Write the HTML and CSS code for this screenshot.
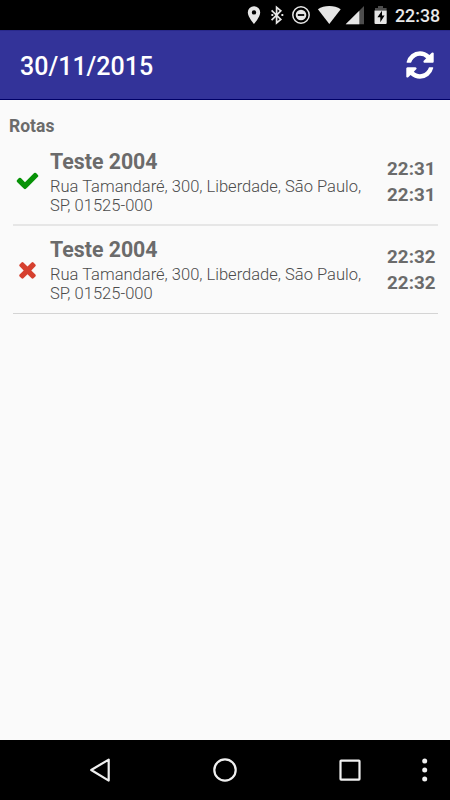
FILE: index.html
```html
<!DOCTYPE html>
<html lang="pt-BR">
<head>
<meta charset="utf-8">
<title>Rotas</title>
<link rel="stylesheet" href="styles.css">
</head>
<body>
<div class="screen">
  <div class="status">
    <svg class="status-icons" width="150" height="30" viewBox="240 0 150 30">
      <path fill="#e6e6e6" fill-rule="evenodd" d="M254 6.300a6.200 6.200 0 0 0-6.200 6.200c0 4.400 6.200 11.500 6.200 11.500s6.200-7.100 6.200-11.500a6.200 6.200 0 0 0-6.200-6.200zm0 3.900a2.200 2.200 0 1 1 0 4.400a2.200 2.200 0 0 1 0-4.400z"/>
      <path fill="none" stroke="#e6e6e6" stroke-width="1.700" d="M271.600 10.300l9.200 9.200-4.200 3.500v-15.600l4.200 3.500-9.200 9.300"/>
      <path fill="#e6e6e6" d="M271.400 14h1.900v2h-1.900zM281.400 14h1.900v2h-1.900z"/>
      <circle cx="301" cy="15" r="8.200" fill="none" stroke="#e6e6e6" stroke-width="1.500"/>
      <circle cx="301" cy="15" r="5.300" fill="#e6e6e6"/>
      <path fill="#000" d="M297.800 14.100h6.400v1.800h-6.400z"/>
      <path fill="#e6e6e6" d="M329.300 23.900L317.900 9.200q4.900-3.300 11.400-3.300t11.400 3.300z"/>
      <path fill="#4d4d4d" d="M364 6v18.300h-18.300z"/>
      <path fill="#e6e6e6" d="M359.300 10.700v13.600h-13.600z"/>
      <path fill="#4d4d4d" d="M375 10.600V8h3V6h5v2h3.600v2.600z"/>
      <path fill="#e6e6e6" d="M374.500 10.500h12.200v12.600q0 1-1 1h-10.200q-1 0-1-1z"/>
      <path fill="#000" d="M382 10.800l-4.600 6.400h2.900v5l4.300-6.700H382z"/>
    </svg>
    <span class="clock">22:38</span>
  </div>
  <header class="bar">
    <span class="date">30/11/2015</span>
    <svg class="refresh" width="32" height="32" viewBox="0 0 1792 1792"><path d="M1639 1056q0 5-1 7-64 268-268 434.500t-478 166.500q-146 0-282.500-55t-243.500-157l-129 129q-19 19-45 19t-45-19-19-45v-448q0-26 19-45t45-19h448q26 0 45 19t19 45-19 45l-137 137q71 66 161 102t187 36q134 0 250-65t186-179q11-17 53-117 8-23 30-23h192q13 0 22.500 9.500t9.500 22.500zm25-800v448q0 26-19 45t-45 19h-448q-26 0-45-19t-19-45 19-45l138-138q-148-137-349-137-134 0-250 65t-186 179q-11 17-53 117-8 23-30 23h-199q-13 0-22.500-9.500t-9.500-22.500v-7q65-268 270-434.500t480-166.500q146 0 284 55.500t245 156.500l130-129q19-19 45-19t45 19 19 45z"/></svg>
  </header>
  <main class="content">
    <h1 class="heading">Rotas</h1>
    <div class="row">
      <svg class="mark done" width="25" height="25" viewBox="0 0 1792 1792"><path d="M1671 566q0 40-28 68l-724 724-136 136q-28 28-68 28t-68-28l-136-136-362-362q-28-28-28-68t28-68l136-136q28-28 68-28t68 28l294 295 656-657q28-28 68-28t68 28l136 136q28 28 28 68z"/></svg>
      <div class="info">
        <div class="name">Teste 2004</div>
        <div class="address">Rua Tamandaré, 300, Liberdade, São Paulo,<br>SP, 01525-000</div>
      </div>
      <div class="times"><div>22:31</div><div>22:31</div></div>
    </div>
    <div class="row last">
      <svg class="mark failed" width="25" height="25" viewBox="0 0 1792 1792"><path d="M1490 1322q0 40-28 68l-136 136q-28 28-68 28t-68-28l-294-294-294 294q-28 28-68 28t-68-28l-136-136q-28-28-28-68t28-68l294-294-294-294q-28-28-28-68t28-68l136-136q28-28 68-28t68 28l294 294 294-294q28-28 68-28t68 28l136 136q28 28 28 68t-28 68l-294 294 294 294q28 28 28 68z"/></svg>
      <div class="info">
        <div class="name">Teste 2004</div>
        <div class="address">Rua Tamandaré, 300, Liberdade, São Paulo,<br>SP, 01525-000</div>
      </div>
      <div class="times"><div>22:32</div><div>22:32</div></div>
    </div>
  </main>
  <nav class="nav">
    <svg width="450" height="60" viewBox="0 740 450 60" fill="none" stroke="#f0f0f0" stroke-width="2.200" stroke-linejoin="round">
      <path d="M108.700 759.600v21L91.200 770z"/>
      <circle cx="225" cy="770" r="10.700"/>
      <rect x="340.500" y="760.600" width="19" height="19" rx=".6"/>
      <g fill="#f0f0f0" stroke="none"><circle cx="424.700" cy="761" r="2.500"/><circle cx="424.700" cy="770" r="2.500"/><circle cx="424.700" cy="779" r="2.500"/></g>
    </svg>
  </nav>
</div>
</body>
</html>
```
FILE: styles.css
```css
* { box-sizing: border-box; }
body { margin: 0; font-family: Roboto, sans-serif; background: #fafafa; }
.screen { display: flex; flex-direction: column; width: 450px; height: 800px; overflow: hidden; }
.status { display: flex; align-items: center; height: 30px; padding-left: 240px; background: #000; }
.status-icons { display: block; flex: none; }
.clock { margin-left: 5px; padding-top: 1px; color: #e8e8e8; font-size: 17.800px; font-weight: 500; line-height: 30px; }
.bar { display: flex; align-items: center; justify-content: space-between; height: 70px; padding: 0 14px 0 20px; background: #333399; border-top: 1px solid #29298c; border-bottom: 1px solid #000066; }
.date { color: #fff; font-size: 25px; font-weight: 500; line-height: 70px; padding-top: 3px; }
.refresh { fill: #fff; }
.content { flex: 1; color: #6b6b6b; }
.heading { margin: 0; padding: 16px 9px 0; font-size: 17.500px; line-height: 20px; font-weight: 700; }
.row { display: flex; margin: 0 12.500px; height: 90px; border-bottom: 2px solid #e6e6e6; }
.row.last { height: 88px; border-bottom: 1px solid #d4d4d4; }
.mark { flex: none; margin: 32px 0 0 2.500px; }
.last .mark { margin-top: 31px; }
.done { fill: #079207; }
.failed { fill: #d6402f; }
.info { flex: 1; margin-left: 10px; padding-top: 13px; white-space: nowrap; }
.last .info { padding-top: 11px; }
.name { font-size: 21.300px; line-height: 26px; font-weight: 700; }
.address { padding-top: 2px; color: #4c4c4c; font-size: 16.550px; line-height: 19px; font-weight: 300; }
.times { padding: 20px 2px 0 0; font-size: 18.800px; line-height: 26px; font-weight: 700; text-align: right; }
.last .times { padding-top: 18px; }
.nav { height: 60px; background: #000; }
.nav svg { display: block; }
```
